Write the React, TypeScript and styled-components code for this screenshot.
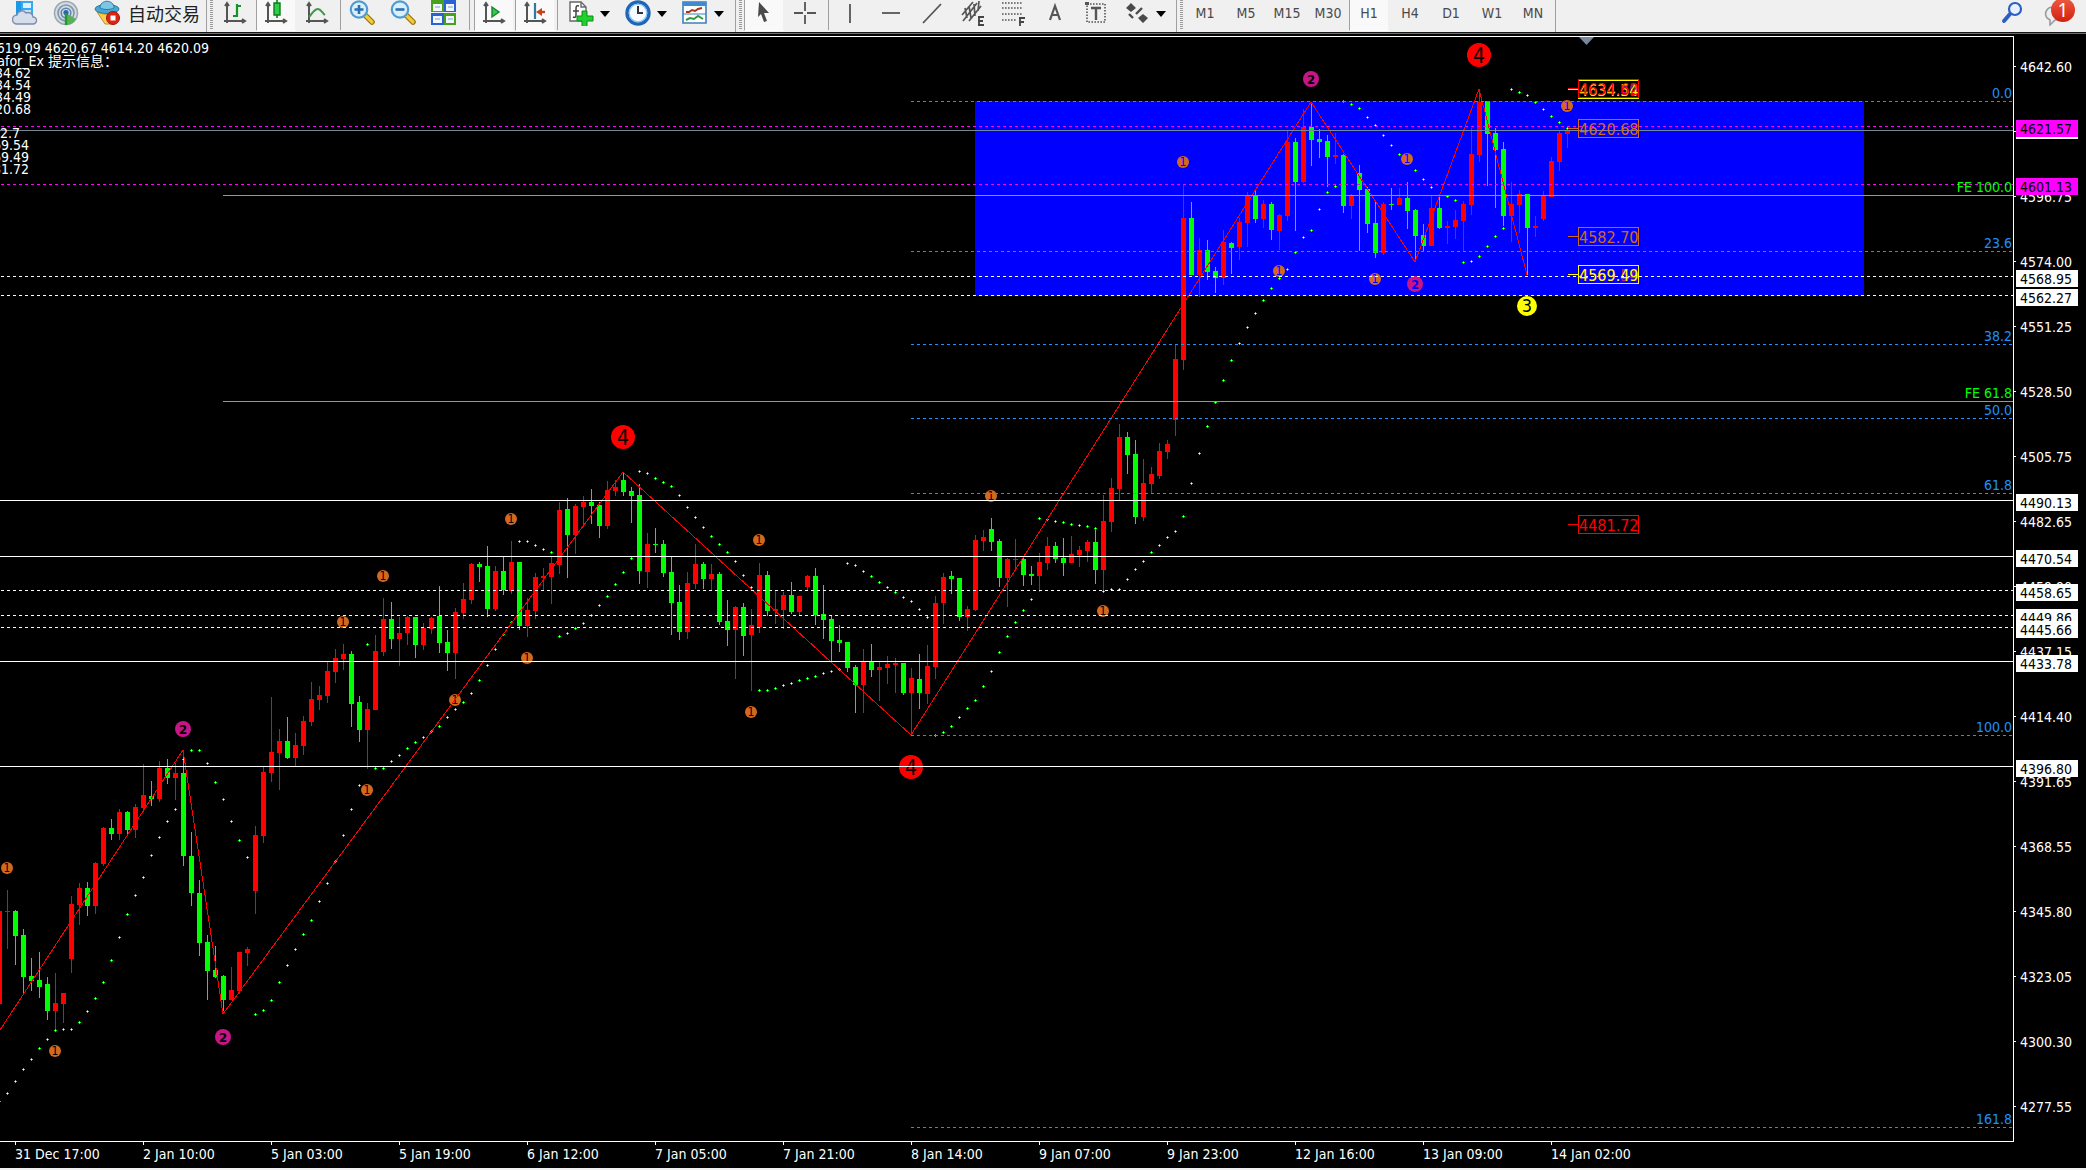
import React from "react";
import styled, { createGlobalStyle, css } from "styled-components";

const UI_FONT = '"DejaVu Sans Condensed", "Noto Sans", "Noto Sans CJK SC", sans-serif';

const GlobalStyle = createGlobalStyle`
  body { margin: 0; background: #000; overflow: hidden; }
  * { box-sizing: border-box; }
`;

/* ---------- layout ---------- */

const Terminal = styled.div`
  display: grid;
  grid-template-rows: auto minmax(0, 1fr);
  height: 100vh;
  font-family: ${UI_FONT};
  font-size: 14px;
  background: #000;
`;

const Toolbar = styled.header`
  display: flex;
  align-items: flex-start;
  height: 34px;
  padding-left: 5px;
  background: #f0f0f0;
  border-bottom: 2px solid #6c6c6c;
  border-bottom-style: groove;
  overflow: hidden;
`;

const ToolButton = styled.button<{ $pressed?: boolean }>`
  flex: none;
  display: flex;
  align-items: center;
  justify-content: center;
  width: 41px;
  height: 31px;
  margin: 0;
  padding: 0 0 5px;
  border: 0;
  border-left: 1px solid transparent;
  border-right: 2px solid transparent;
  background: none;
  color: #4a4a4a;
  font-family: ${UI_FONT};
  font-size: 14px;
  line-height: 20px;
  ${(p) =>
    p.$pressed &&
    css`
      border-left-color: #a0a0a0;
      border-right-color: #f0f0f0;
      border-bottom: 1px solid #fff;
      background: #f9f9f9;
    `}
`;

const AutoTradeButton = styled(ToolButton)`
  width: 119px;
  justify-content: flex-start;
  gap: 8px;
  padding-left: 6px;
  color: #222;
  font-family: "Noto Sans CJK SC", sans-serif;
  font-size: 18px;
`;

const CaretButton = styled.button`
  flex: none;
  display: flex;
  align-items: center;
  justify-content: center;
  width: 10px;
  height: 28px;
  margin: 0 8px 0 -2px;
  padding: 0;
  border: 0;
  background: none;
`;

const Separator = styled.span<{ $before: number; $after: number; $full?: boolean }>`
  flex: none;
  width: 1px;
  height: ${(p) => (p.$full ? 32 : 30)}px;
  margin: 0 ${(p) => p.$after}px 0 ${(p) => p.$before}px;
  background: #a0a0a0;
`;

const Grip = styled.span`
  flex: none;
  width: 3px;
  height: 30px;
  margin: 0 2px 0 3px;
  background: repeating-linear-gradient(#9c9c9c 0 1px, #f0f0f0 1px 2px);
`;

const Spacer = styled.span`
  flex: 1;
`;

const NoticeButton = styled(ToolButton)`
  position: relative;
  margin-right: 9px;
  width: 44px;
`;

const NoticeCount = styled.span`
  position: absolute;
  top: -2px;
  right: 0;
  width: 24px;
  height: 24px;
  border-radius: 50%;
  background: linear-gradient(#ee5a45, #d2200d);
  color: #fff;
  font-family: "Noto Sans", sans-serif;
  font-size: 19px;
  line-height: 24px;
  text-align: center;
`;

const ChartWindow = styled.main`
  display: grid;
  grid-template-columns: minmax(0, 1fr) 72px;
  grid-template-rows: minmax(0, 1fr) auto;
  padding-top: 2px;
  min-height: 0;
  border-bottom: 2px solid #f0f0f0;
`;

const PlotPane = styled.section`
  position: relative;
  border: 1px solid #fff;
  border-left: 0;
  overflow: hidden;
`;

const Surface = styled.svg`
  display: block;
  width: 100%;
  height: 100%;
  font-family: ${UI_FONT};
`;

const InfoOverlay = styled.div`
  position: absolute;
  top: 4px;
  left: 0;
  color: #fff;
`;

const InfoLine = styled.div<{ $end: number; $tall?: boolean }>`
  display: flex;
  justify-content: flex-end;
  width: ${(p) => p.$end}px;
  height: ${(p) => (p.$tall ? 14 : 12)}px;
  line-height: ${(p) => (p.$tall ? 14 : 12)}px;
  white-space: pre;
`;

const TimeAxis = styled.footer`
  grid-column: 1 / -1;
  display: flex;
  height: 26px;
  padding-left: 15px;
  color: #fff;
  overflow: hidden;
`;

const TimeLabel = styled.span`
  flex: none;
  width: 128px;
  height: 24px;
  line-height: 25px;
  white-space: nowrap;
  background: linear-gradient(#fff, #fff) 0 0 / 1px 3px no-repeat;
`;

/* ---------- toolbar icons ---------- */

const Ico = ({ children, w = 26, h = 26 }: { children: React.ReactNode; w?: number; h?: number }) => (
  <svg width={w} height={h} viewBox={`0 0 ${w} ${h}`} fill="none" aria-hidden="true">
    {children}
  </svg>
);

const CloudIcon = () => (
  <Ico>
    <path d="M4 1h5v15H4z" fill="#1c97e6" />
    <path d="M9 1h12v15H9z" fill="#38a9f0" />
    <path d="M11 3h8v5h-8z" fill="#dff1fd" />
    <path d="M11 10h8v3h-8z" fill="#bfe3fa" />
    <path d="M5 24a4.500 4.500 0 0 1 0-9 5 5 0 0 1 9-2 5 5 0 0 1 7 4 3.500 3.500 0 0 1 0 7z" fill="#d7deeb" stroke="#7c8cab" strokeWidth="1.400" />
  </Ico>
);

const SignalIcon = () => (
  <Ico>
    <circle cx="13" cy="13" r="11.500" fill="#d5dbe0" stroke="#9aa7b2" strokeWidth="1.500" />
    <circle cx="13" cy="13" r="8" stroke="#7f97ad" strokeWidth="1.600" />
    <circle cx="13" cy="13" r="4.800" stroke="#5d86b4" strokeWidth="1.600" />
    <path d="M13 13l10 6a12 12 0 0 1-10 6z" fill="#58b157" />
    <circle cx="13" cy="12.500" r="2.600" fill="#2f62b0" />
    <path d="M13 13v12" stroke="#1f9a2c" strokeWidth="2.400" />
  </Ico>
);

const AutoIcon = () => (
  <Ico>
    <path d="M3 12c6 3 14 3 20 0l-6 12h-6z" fill="#f7d053" stroke="#c99216" />
    <ellipse cx="13" cy="9" rx="12" ry="4.500" fill="#4aa6d2" stroke="#2b7aa8" />
    <path d="M6 8c0-9 14-9 14 0-4 2-10 2-14 0z" fill="#7cc6e6" stroke="#2b7aa8" />
    <circle cx="19" cy="18" r="6.500" fill="#dd2414" stroke="#a5150a" />
    <path d="M16.500 15.500h5v5h-5z" fill="#fff" />
  </Ico>
);

const axes = <path d="M5 4v19M2 21h20M3 6l2-3 2 3M20 19l3 2-3 2" stroke="#555" strokeWidth="2" />;

const BarsIcon = () => (
  <Ico>
    {axes}
    <path d="M15 4v13M15 6h4M11 16h4" stroke="#12942a" strokeWidth="2.200" />
  </Ico>
);

const CandlesIcon = () => (
  <Ico>
    {axes}
    <path d="M14 0v18" stroke="#0b7d1b" strokeWidth="1.600" />
    <path d="M11 3h6v12h-6z" fill="#2fce4a" stroke="#0b7d1b" strokeWidth="1.400" />
  </Ico>
);

const LineIcon = () => (
  <Ico>
    {axes}
    <path d="M5 17c3-3 5-8 9-8 3 0 4 4 7 6" stroke="#3c9a4c" strokeWidth="2" />
  </Ico>
);

const ZoomIcon = ({ plus }: { plus?: boolean }) => (
  <Ico>
    <path d="M16 15l7 7" stroke="#94700e" strokeWidth="5.500" strokeLinecap="round" />
    <path d="M16 15l7 7" stroke="#f2cb3a" strokeWidth="3.200" strokeLinecap="round" />
    <circle cx="10" cy="9.500" r="8.200" fill="#d9f0fc" stroke="#4f9bd2" strokeWidth="2.200" />
    <path d={plus ? "M5.500 9.500h9M10 5v9" : "M5.500 9.500h9"} stroke="#2b6fae" strokeWidth="2.600" />
  </Ico>
);

const TilesIcon = () => (
  <Ico>
    <path d="M0 0h13v12H0zM13 13h12v12H13z" fill="#47a01e" />
    <path d="M13 0h12v12H13zM0 13h13v12H0z" fill="#2b62d2" />
    <path d="M2 4h9v7H2zM15 4h8v7h-8zM2 16h9v7H2zM15 16h8v7h-8z" fill="#f2f7ff" />
    <path d="M4 7h5M17 7h5M4 19h5M17 19h5" stroke="#a9bce0" strokeWidth="1.500" />
  </Ico>
);

const ScrollIcon = () => (
  <Ico>
    {axes}
    <path d="M11 7l7 5-7 5z" fill="#3bc455" stroke="#12892a" strokeWidth="1.400" />
  </Ico>
);

const ShiftIcon = () => (
  <Ico>
    {axes}
    <path d="M13 3v16" stroke="#2b7ba8" strokeWidth="2.200" />
    <path d="M23 12h-5" stroke="#c7421a" strokeWidth="2.400" />
    <path d="M14 12l6-4v8z" fill="#c7421a" />
  </Ico>
);

const IndicatorIcon = () => (
  <Ico>
    <path d="M2 2h11l5 5v14H2z" fill="#fff" stroke="#666" strokeWidth="1.400" />
    <path d="M13 2v5h5" stroke="#666" strokeWidth="1.400" />
    <path d="M11 6c-3-1-3 1-3 3v6c0 2-1 3-3 2M5 11h6" stroke="#444" strokeWidth="1.500" />
    <path d="M14 11h5v5h6v5h-6v6h-5v-6H9v-5h5z" fill="#1fd02f" stroke="#0d8a19" />
  </Ico>
);

const ClockIcon = () => (
  <Ico>
    <circle cx="13" cy="13" r="11" fill="#f5fbff" stroke="#1f66b8" strokeWidth="3.400" />
    <circle cx="13" cy="13" r="8.800" stroke="#8cc2ee" strokeWidth="1.200" />
    <path d="M13 6v7h5" stroke="#333" strokeWidth="2" />
  </Ico>
);

const TemplateIcon = () => (
  <Ico>
    <path d="M1 2h23v21H1z" fill="#fff" stroke="#3f7fc0" strokeWidth="1.600" />
    <path d="M1 2h23v4H1z" fill="#3f8bd0" />
    <path d="M1 14h23" stroke="#3f7fc0" />
    <path d="M4 12h3l3-2 3 1 3-2 4-1" stroke="#a8341a" strokeWidth="2" />
    <path d="M4 20l4-2 4 1 4-3 5 3" stroke="#2f9a3a" strokeWidth="2" />
  </Ico>
);

const CursorIcon = () => (
  <Ico>
    <path d="M8 2l10 11h-5l3 8-3 1-3-8-3 3z" fill="#4a4a4a" />
  </Ico>
);

const CrossIcon = () => (
  <Ico>
    <path d="M13 2v9M13 15v9M2 13h9M15 13h9" stroke="#555" strokeWidth="1.800" />
  </Ico>
);

const StrokeIcon = ({ d }: { d: string }) => (
  <Ico>
    <path d={d} stroke="#555" strokeWidth="1.800" />
  </Ico>
);

const ChannelIcon = () => (
  <Ico>
    <path d="M2 15L13 2M3 21L17 3M9 21L21 6M5 8l2 10M9 6l2 12M14 4l1 12M19 1l-1 10" stroke="#555" strokeWidth="1.700" />
    <path d="M18 17h6M18 21h5M18 25h6M19 17v8" stroke="#444" strokeWidth="1.800" />
  </Ico>
);

const FiboIcon = () => (
  <Ico>
    <path d="M1 3h21M1 8h21M1 14h21M1 20h14" stroke="#555" strokeWidth="1.600" strokeDasharray="1.600 1.400" />
    <path d="M18 18h6M18 22h5M19 18v8" stroke="#444" strokeWidth="1.800" />
  </Ico>
);

const TextIcon = () => (
  <Ico>
    <path d="M8 20L13 6l5 14M9.500 15h7" stroke="#555" strokeWidth="2.200" />
  </Ico>
);

const LabelIcon = () => (
  <Ico>
    <path d="M4 4h18v18H4z" stroke="#555" strokeWidth="1.600" strokeDasharray="1.600 1.400" />
    <path d="M2 2h4v3H2z" fill="#555" />
    <path d="M8 8h10M13 8v12" stroke="#555" strokeWidth="2.400" />
  </Ico>
);

const ArrowsIcon = () => (
  <Ico>
    <path d="M7 3l5 5-5 4-5-4zM19 14l5 4-5 5-5-5z" fill="#4a4a4a" />
    <path d="M5 14l4 4M12 14l6-6" stroke="#4a4a4a" strokeWidth="2.400" />
  </Ico>
);

const SearchIcon = () => (
  <Ico>
    <path d="M11 14l-6 7" stroke="#2c5fc0" strokeWidth="4" strokeLinecap="round" />
    <circle cx="16" cy="9" r="6" fill="#e8f1ff" stroke="#2c5fc0" strokeWidth="2.200" />
  </Ico>
);

const BubbleIcon = () => (
  <Ico>
    <path d="M10 7c-6 1-8 7-5 11l3 2v5l5-5c6 0 9-2 10-6" fill="#eee" stroke="#9a9aa2" strokeWidth="1.600" />
  </Ico>
);

const Caret = ({ label }: { label: string }) => (
  <CaretButton aria-label={label}>
    <svg width="10" height="6" viewBox="0 0 10 6" aria-hidden="true">
      <path d="M0 0h10L5 6z" fill="#000" />
    </svg>
  </CaretButton>
);

const timeframes = ["M1", "M5", "M15", "M30", "H1", "H4", "D1", "W1", "MN"];

const drawTools: [string, React.ReactNode][] = [
  ["Vertical line", <StrokeIcon d="M13 4v19" />],
  ["Horizontal line", <StrokeIcon d="M4 13h18" />],
  ["Trend line", <StrokeIcon d="M4 23L22 4" />],
  ["Channel", <ChannelIcon />],
  ["Fibonacci", <FiboIcon />],
  ["Text", <TextIcon />],
  ["Text label", <LabelIcon />],
  ["Arrows", <ArrowsIcon />],
];

/* ---------- chart data ---------- */

/* Bars are 8px apart. Each row: direction, high, body top, body bottom, low and
   stop-and-reverse dot, in thirds of a pixel below the batch origin. */
const STEP = 8;
const FIRST_X = -1;

const batches: { origin: number; rows: string }[] = [
  {
    origin: 700,
    rows: `R 633 633 912 912 1204|R 570 633 636 747 1180|G 630 633 708 795 1144|G 687 705 831 879 1108|G 774 828 843 873 1078|
G 756 840 861 894 1045|G 831 852 933 960 1018|R 819 909 933 990 991|R 879 879 912 969 988|R 588 612 777 819 988|R 549 564 615 675 967|
G 546 564 618 648 934|R 486 489 618 642 895|R 381 384 492 498 847|G 357 384 402 420 781|R 327 336 402 420 712|G 333 336 390 402 643|
R 312 321 390 414 586|R 192 285 324 336 532|G 243 288 297 318 466|R 183 204 297 306 412|G 177 204 234 252 364|R 189 219 234 300 328|
G 162 219 468 498 178|G 396 468 579 618 151|G 540 579 729 768 151|G 705 726 813 900 190|G 738 810 831 834 247|G 825 828 900 933 298|
R 801 870 900 900 364|R 756 756 873 882 421|R 741 747 759 798 472|R 378 405 573 642 943|R 201 216 408 429 931`,
  },
  {
    origin: 440,
    rows: `R 771 936 999 1026 1681|R 867 903 939 1050 1627|G 831 903 954 957 1576|R 879 915 954 978 1528|R 828 843 918 945 1483|
R 726 777 846 858 1441|R 738 765 780 810 1384|R 666 693 768 789 1330|R 627 654 696 729 1264|R 612 642 657 690 1186|G 633 642 792 861 1108|
G 768 786 870 906 1036|R 789 807 870 987 613|R 585 633 810 810 985|R 474 537 636 648 985|G 486 537 597 627 964|R 531 579 597 678 946|
R 528 531 579 615 925|G 531 531 615 654 907|R 549 564 615 630 892|R 531 534 567 582 874|G 438 528 609 639 859|G 570 606 639 693 832|
R 504 516 639 717 808|R 429 477 519 537 787|R 369 372 480 492 760|G 366 372 381 426 721|G 318 378 507 531 676|R 378 393 507 513 628|
G 351 393 450 465 583|R 303 366 453 462 547|G 366 366 558 570 304|R 474 510 558 591 304|R 399 411 513 537 316|R 384 408 414 450 328|
R 351 369 411 492 337|R 186 210 375 402 589|G 174 207 285 414 580|R 192 198 285 342 565|R 168 186 201 261 550|G 147 186 198 252 526|
G 186 195 258 294 496|R 123 150 258 267 469|R 120 141 153 168 433|G 96 120 156 168 397|G 141 153 168 249 355|G 132 165 393 432 94|
R 279 312 396 444 100`,
  },
  {
    origin: 420,
    rows: `G 324 372 375 399 175|G 360 372 459 471 187|G 411 456 549 645 199|G 495 546 636 660 226|R 456 489 636 657 262|
R 372 432 492 507 292|G 426 432 477 507 322|R 432 462 477 510 349|G 456 462 606 615 373|G 540 603 630 678 397|R 558 561 630 777 424|
G 549 561 648 708 466|R 567 615 645 813 502|R 429 465 621 639 811|G 453 465 573 588 811|R 513 567 573 612 805|R 516 525 570 627 796|
G 486 525 576 582 790|R 528 528 576 588 781|R 465 468 501 510 775|G 444 468 585 615 769|G 495 582 600 657 760|G 588 597 663 726 754|
G 615 660 669 696 748|G 666 666 744 756 430|G 735 741 795 879 436|R 687 723 795 879 454|G 672 723 750 771 469|R 726 741 750 843 487|
R 708 732 744 792 502|R 714 729 735 819 517|G 729 729 819 825 532|R 744 774 819 945 544|G 702 777 819 867 568|R 675 738 822 852 592|
R 528 549 741 777 946|R 459 471 549 612 937|G 453 468 477 522 919|G 474 474 591 603 892|R 558 567 591 633 865|R 345 360 570 573 841|
R 330 351 363 393 799|G 294 327 366 393 754|G 357 363 474 501 697|R 414 417 474 561 649|R 357 417 420 453 607`,
  },
  {
    origin: 380,
    rows: `G 531 537 585 618 691|G 558 582 588 615 658|R 519 546 588 636 415|R 471 498 549 570 418|G 486 498 537 549 424|
G 474 534 549 588 427|R 468 522 549 549 433|R 498 510 525 561 436|R 480 486 513 546 439|G 444 486 570 612 445|R 345 423 570 633 634|
R 294 324 426 456 628|R 132 171 327 360 628|G 156 171 225 282 598|G 180 222 411 432 568|R 237 309 411 423 544|R 261 282 312 342 517|
R 189 213 288 297 496|R 180 192 216 237 472`,
  },
  {
    origin: 80,
    rows: `R 795 837 1020 1068 1354|R 315 414 840 870 1309|G 366 414 585 585 1210|R 474 510 585 651 1120|G 480 510 576 600 1039|
G 561 573 594 639 967|R 450 486 594 615 901|G 486 489 504 582 841|R 414 426 501 540 790|R 336 348 429 501 742|G 330 348 417 429 700|
R 360 372 417 444 661|G 366 372 450 480 625|R 402 405 453 510 595|R 150 186 408 423 568|G 174 186 306 453 517|R 87 141 306 309 472|
G 66 141 180 258 451|G 147 177 186 234 388|G 165 183 231 321 337|R 159 225 231 252 319|G 222 225 378 399 64|R 342 348 378 417 73|
G 255 279 330 513 85|G 321 327 432 459 112|G 363 429 519 534 136|R 366 372 519 525 166|G 324 372 375 390 196|R 324 354 375 375 223|
G 306 354 393 447 244|G 387 390 468 546 271|G 432 465 498 513 298|R 348 384 498 498 322|G 342 384 444 447 346|R 423 438 444 492 349|
R 390 420 441 477 361|R 363 372 423 513 547|R 144 222 375 405 544|R 27 66 225 246 529|G 63 63 162 318 499|G 144 159 210 384 469|
G 186 207 408 438 445|R 306 372 408 486 28|R 330 342 375 459 37|G 342 342 444 585 46|R 408 438 444 471 67|R 333 348 417 423 88|
R 231 243 351 351 109|R 153 159 246 273 127|R 150 150 162 204 145`,
  },
];

const bars = batches
  .flatMap(({ origin, rows }) =>
    rows.split("|").map((row) => {
      const [dir, ...nums] = row.trim().split(" ");
      const [high, top, bottom, low, sar] = nums.map((n) => origin + Math.floor(Number(n) / 3));
      return { up: dir === "R", high, top, bottom, low, sar };
    })
  )
  .map((bar, i) => ({ ...bar, x: FIRST_X + i * STEP }));

const zigzag = "0,1030 183,750 223,1014 623,472 911,735 1311,102 1415,262 1479,89 1527,275";

type Mark = [number, number, number];
const marks: Mark[] = [
  [7, 868, 1], [55, 1051, 1], [367, 790, 1], [343, 622, 1], [383, 576, 1], [511, 519, 1], [527, 658, 1],
  [455, 700, 1], [759, 540, 1], [751, 712, 1], [991, 496, 1], [1103, 611, 1], [1183, 162, 1], [1279, 271, 1],
  [1375, 279, 1], [1407, 159, 1], [1567, 106, 1],
  [183, 729, 2], [223, 1037, 2], [1311, 79, 2], [1415, 284, 2],
  [623, 437, 4], [911, 767, 4], [1479, 55, 4],
  [1527, 306, 3],
];

const markStyle: Record<number, { r: number; fill: string; size: number; weight: number }> = {
  1: { r: 6, fill: "#d2691e", size: 12, weight: 400 },
  2: { r: 8, fill: "#c71585", size: 13, weight: 700 },
  3: { r: 10, fill: "#ffff00", size: 18, weight: 400 },
  4: { r: 12, fill: "#ff0000", size: 21, weight: 400 },
};

const zone = { x: 975, y: 101, width: 889, height: 195 };
const insideZone = (x: number, y: number) =>
  x > zone.x && x < zone.x + zone.width && y > zone.y + 4 && y < zone.y + zone.height;

type Level = { y: number; color: string; from?: number; dashed?: boolean; text?: string };
const BLUE = "#1e90ff";
const levels: Level[] = [
  { y: 101, color: BLUE, from: 911, dashed: true, text: "0.0" },
  { y: 251, color: BLUE, from: 911, dashed: true, text: "23.6" },
  { y: 344, color: BLUE, from: 911, dashed: true, text: "38.2" },
  { y: 418, color: BLUE, from: 911, dashed: true, text: "50.0" },
  { y: 493, color: BLUE, from: 911, dashed: true, text: "61.8" },
  { y: 735, color: BLUE, from: 911, dashed: true, text: "100.0" },
  { y: 1127, color: BLUE, from: 911, dashed: true, text: "161.8" },
  { y: 126, color: "#ff00ff", dashed: true, from: 1 },
  { y: 184, color: "#ff00ff", dashed: true, from: 1 },
  { y: 130, color: "#778899" },
  { y: 195, color: "#00ff00", from: 223, text: "FE 100.0" },
  { y: 401, color: "#00ff00", from: 223, text: "FE 61.8" },
  { y: 276, color: "#fff", dashed: true, from: 1 },
  { y: 295, color: "#fff", dashed: true, from: 1 },
  { y: 590, color: "#fff", dashed: true, from: 1 },
  { y: 615, color: "#fff", dashed: true, from: 1 },
  { y: 627, color: "#fff", dashed: true, from: 1 },
  { y: 500, color: "#fff" },
  { y: 556, color: "#fff" },
  { y: 661, color: "#fff" },
  { y: 766, color: "#fff" },
];

const priceArrows = [
  { y: 89, text: "4634.49", color: "#c71585" },
  { y: 89, text: "4634.54", color: "#ffff00" },
  { y: 88, text: "4634.62", color: "#ff0000" },
  { y: 128, text: "4620.68", color: "#d2691e" },
  { y: 236, text: "4582.70", color: "#d2691e" },
  { y: 274, text: "4569.54", color: "#c71585" },
  { y: 274, text: "4569.49", color: "#ffff00" },
  { y: 524, text: "4481.72", color: "#ff0000" },
];

const scale = [
  "4642.60", "4619.85", "4596.75", "4574.00", "4551.25", "4528.50", "4505.75", "4482.65", "4459.90",
  "4437.15", "4414.40", "4391.65", "4368.55", "4345.80", "4323.05", "4300.30", "4277.55",
];

const tags = [
  { y: 128, text: "4620.09", fill: "#fff" },
  { y: 126, text: "4621.57", fill: "#ff00ff" },
  { y: 184, text: "4601.13", fill: "#ff00ff" },
  { y: 276, text: "4568.95", fill: "#fff" },
  { y: 295, text: "4562.27", fill: "#fff" },
  { y: 500, text: "4490.13", fill: "#fff" },
  { y: 556, text: "4470.54", fill: "#fff" },
  { y: 590, text: "4458.65", fill: "#fff" },
  { y: 615, text: "4449.86", fill: "#fff" },
  { y: 627, text: "4445.66", fill: "#fff" },
  { y: 661, text: "4433.78", fill: "#fff" },
  { y: 766, text: "4396.80", fill: "#fff" },
];

const times = [
  "31 Dec 17:00", "2 Jan 10:00", "5 Jan 03:00", "5 Jan 19:00", "6 Jan 12:00", "7 Jan 05:00", "7 Jan 21:00",
  "8 Jan 14:00", "9 Jan 07:00", "9 Jan 23:00", "12 Jan 16:00", "13 Jan 09:00", "14 Jan 02:00",
];

const info: { text: string; end: number }[] = [
  { text: "afor_Ex 提示信息：", end: 118 },
  { text: "4634.62", end: 31 },
  { text: "4634.54", end: 31 },
  { text: "4634.49", end: 31 },
  { text: "4620.68", end: 31 },
  { text: "", end: 31 },
  { text: "4582.7", end: 20 },
  { text: "4569.54", end: 29 },
  { text: "4569.49", end: 29 },
  { text: "4481.72", end: 29 },
];

/* Chart heights are stored from the window's top edge. */
const PLOT_TOP = 37;

/* ---------- chart parts ---------- */

const Plot = () => (
  <Surface role="img" aria-label="Price chart, H1">
    <g transform={`translate(0 ${-PLOT_TOP})`}>
      <rect {...zone} fill="#0000ff" />
      <g shapeRendering="crispEdges">
        {bars.map((b) => (
          <g key={b.x} fill={b.up ? "#ff0000" : "#00ff00"}>
            <rect x={b.x} y={b.high} width="1" height={b.low - b.high} />
            <rect x={b.x - 2} y={b.top} width="5" height={b.bottom - b.top} />
          </g>
        ))}
        {bars.map((b) => (
          <g key={b.x}>
            <path d={`M${b.x - 1} ${b.sar}h3v1h-3zM${b.x} ${b.sar - 1}h1v3h-1z`} fill="#00ff00" />
            <rect x={b.x} y={b.sar} width="1" height="1" fill="#fff" />
          </g>
        ))}
      </g>
      {marks.map(([x, y, kind]) => {
        const m = markStyle[kind];
        return (
          <g key={`${x}-${y}`}>
            <circle cx={x} cy={y} r={m.r} fill={m.fill} />
            <text
              x={x}
              y={y + Math.round(m.size * 0.36)}
              fontSize={m.size}
              fontWeight={m.weight}
              textAnchor="middle"
              fill={insideZone(x, y) ? "#0000ff" : "#000"}
            >
              {kind}
            </text>
          </g>
        );
      })}
      <polyline points={zigzag} fill="none" stroke="#ff0000" shapeRendering="crispEdges" />
      <g shapeRendering="crispEdges">
        {levels.map((l) => (
          <line
            key={l.y}
            x1={l.from ?? 0}
            x2="100%"
            y1={l.y + 0.5}
            y2={l.y + 0.5}
            stroke={l.color}
            strokeDasharray={l.dashed ? "3 3" : undefined}
          />
        ))}
      </g>
      {levels.map((l) =>
        l.text ? (
          <text key={l.y} x="100%" dx="-1" y={l.y - 3} fontSize="14" textAnchor="end" fill={l.color}>
            {l.text}
          </text>
        ) : null
      )}
      {priceArrows.map((p) => (
        <g key={p.text}>
          <path
            d={`M1568 ${p.y + 0.5}H1578M1578.500 ${p.y - 8.5}h60v18h-60z`}
            stroke={p.color}
            fill="none"
            shapeRendering="crispEdges"
          />
          <text x="1579" y={p.y + 7} fontSize="16" fill={p.color}>
            {p.text}
          </text>
        </g>
      ))}
      <path d="M1579 37h15l-7.500 8z" fill="#778899" />
    </g>
  </Surface>
);

const PriceScale = () => (
  <Surface role="img" aria-label="Price scale">
    <g transform={`translate(0 ${1 - PLOT_TOP})`} fontSize="14">
      {scale.map((text, i) => (
        <g key={text} fill="#fff">
          <rect x="0" y={66 + i * 65} width="2" height="1" />
          <text x="6" y={72 + i * 65}>
            {text}
          </text>
        </g>
      ))}
      {tags.map((t) => (
        <g key={t.text}>
          <rect x="2" y={t.y - 6} width="62" height="17" fill={t.fill} />
          <text x="6" y={t.y + 8} fill="#000">
            {t.text}
          </text>
        </g>
      ))}
    </g>
  </Surface>
);

export default function App() {
  return (
    <Terminal>
      <GlobalStyle />
      <Toolbar>
        <ToolButton aria-label="Virtual hosting"><CloudIcon /></ToolButton>
        <ToolButton aria-label="Signals"><SignalIcon /></ToolButton>
        <AutoTradeButton>
          <AutoIcon />
          自动交易
        </AutoTradeButton>
        <Separator $before={0} $after={0} $full />
        <Grip />
        <ToolButton aria-label="Bar chart"><BarsIcon /></ToolButton>
        <ToolButton aria-label="Candlesticks" $pressed><CandlesIcon /></ToolButton>
        <ToolButton aria-label="Line chart"><LineIcon /></ToolButton>
        <Separator $before={2} $after={1} />
        <ToolButton aria-label="Zoom in"><ZoomIcon plus /></ToolButton>
        <ToolButton aria-label="Zoom out"><ZoomIcon /></ToolButton>
        <ToolButton aria-label="Tile windows"><TilesIcon /></ToolButton>
        <Separator $before={4} $after={4} />
        <ToolButton aria-label="Auto scroll" $pressed><ScrollIcon /></ToolButton>
        <ToolButton aria-label="Chart shift" $pressed><ShiftIcon /></ToolButton>
        <Separator $before={1} $after={3} />
        <ToolButton aria-label="Indicators"><IndicatorIcon /></ToolButton>
        <Caret label="Indicator list" />
        <ToolButton aria-label="Periods"><ClockIcon /></ToolButton>
        <Caret label="Period list" />
        <ToolButton aria-label="Templates"><TemplateIcon /></ToolButton>
        <Caret label="Template list" />
        <Separator $before={3} $after={0} $full />
        <Grip />
        <ToolButton aria-label="Cursor" $pressed><CursorIcon /></ToolButton>
        <ToolButton aria-label="Crosshair"><CrossIcon /></ToolButton>
        <Separator $before={2} $after={1} />
        {drawTools.map(([label, icon]) => (
          <ToolButton key={label} aria-label={label}>{icon}</ToolButton>
        ))}
        <Caret label="Arrow list" />
        <Separator $before={2} $after={0} $full />
        <Grip />
        {timeframes.map((t) => (
          <ToolButton key={t} $pressed={t === "H1"}>{t}</ToolButton>
        ))}
        <Separator $before={1} $after={0} $full />
        <Spacer />
        <ToolButton aria-label="Search"><SearchIcon /></ToolButton>
        <NoticeButton aria-label="Notifications">
          <BubbleIcon />
          <NoticeCount>1</NoticeCount>
        </NoticeButton>
      </Toolbar>
      <ChartWindow>
        <PlotPane>
          <Plot />
          <InfoOverlay>
            <InfoLine $end={209} $tall>4619.09 4620.67 4614.20 4620.09</InfoLine>
            {info.map((line, i) => (
              <InfoLine key={i} $end={line.end}>{line.text}</InfoLine>
            ))}
          </InfoOverlay>
        </PlotPane>
        <PriceScale />
        <TimeAxis>
          {times.map((t) => (
            <TimeLabel key={t}>{t}</TimeLabel>
          ))}
        </TimeAxis>
      </ChartWindow>
    </Terminal>
  );
}
